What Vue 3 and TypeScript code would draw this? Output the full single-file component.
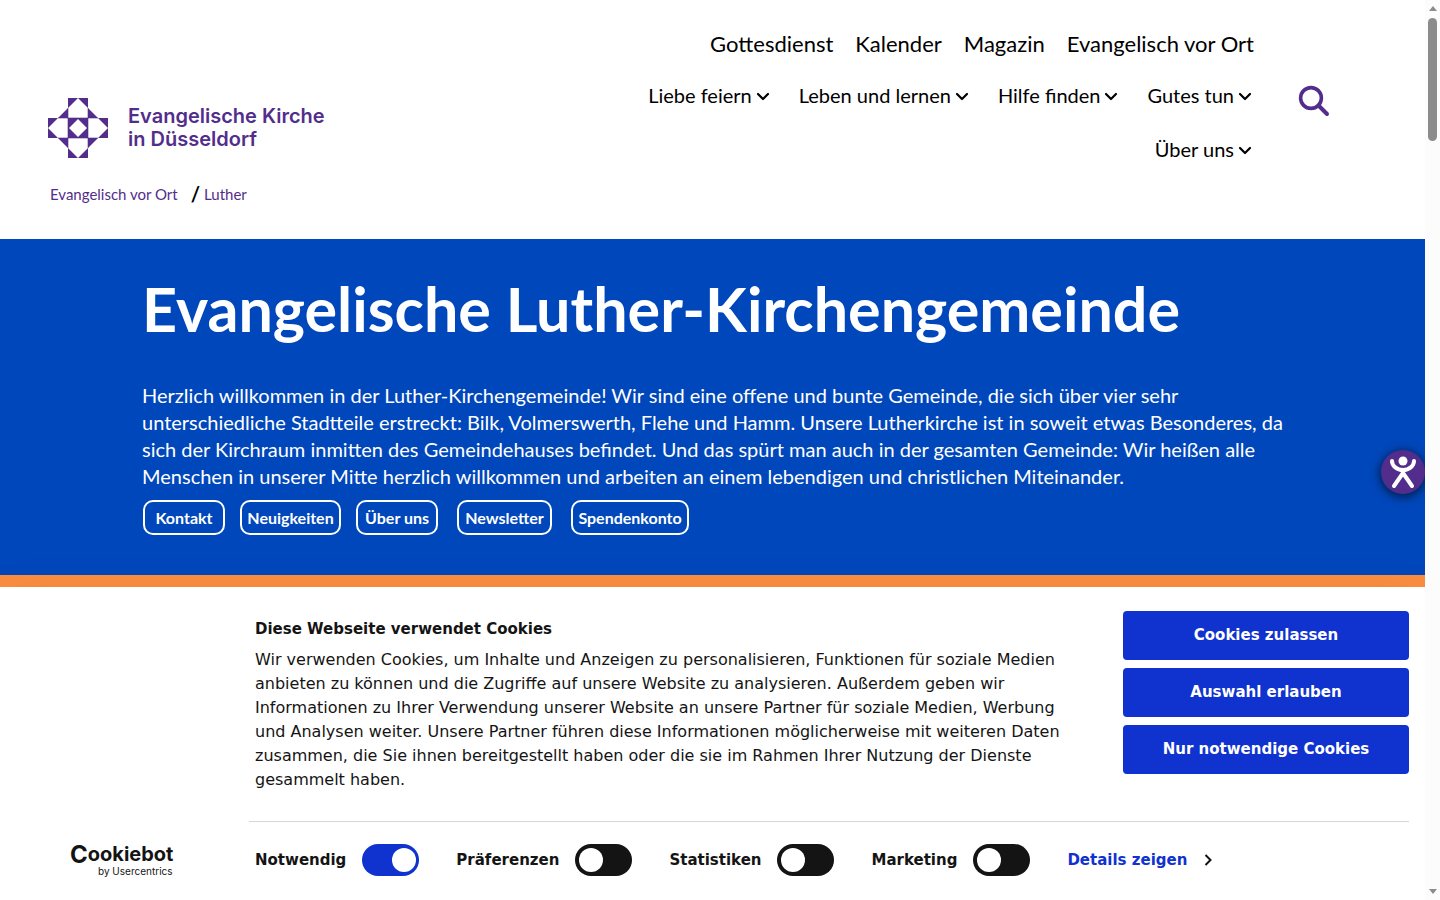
<script setup lang="ts">
import { ref } from 'vue'

interface Consent {
  id: string
  label: string
  checked: boolean
}

const topLinks: string[] = ['Gottesdienst', 'Kalender', 'Magazin', 'Evangelisch vor Ort']
const menus: string[] = ['Liebe feiern', 'Leben und lernen', 'Hilfe finden', 'Gutes tun', 'Über uns']
const anchors: { label: string; size: string }[] = [
  { label: 'Kontakt', size: 'short' },
  { label: 'Neuigkeiten', size: 'medium' },
  { label: 'Über uns', size: 'short wide-gap' },
  { label: 'Newsletter', size: 'regular wide-gap' },
  { label: 'Spendenkonto', size: 'long' },
]
const choices: string[] = ['Cookies zulassen', 'Auswahl erlauben', 'Nur notwendige Cookies']
const consents = ref<Consent[]>([
  { id: 'necessary', label: 'Notwendig', checked: true },
  { id: 'preferences', label: 'Präferenzen', checked: false },
  { id: 'statistics', label: 'Statistiken', checked: false },
  { id: 'marketing', label: 'Marketing', checked: false },
])
</script>

<template>
  <div class="viewport">
    <div class="page">
      <header class="header">
        <div class="brand">
          <a class="logo" href="#">
            <svg class="logo-mark" viewBox="0 0 60 60" aria-hidden="true">
              <path
                fill="#532d8c"
                fill-rule="evenodd"
                d="M20 0H30L20 10ZM30 0H40V10ZM20 10V20H10ZM40 10L50 20H40ZM0 20H10L0 30ZM0 30L10 40H0ZM50 20H60V30ZM60 30V40H50ZM10 40H20V50ZM40 40H50L40 50ZM20 50L30 60H20ZM40 50V60H30ZM20 20H40V40H20ZM30 21L21 30L30 39L39 30Z"
              />
              <path
                fill="none"
                stroke="#532d8c"
                stroke-width="0.6"
                d="M20 10V50M40 10V50M10 20H50M10 40H50"
              />
            </svg>
            <span class="logo-text">Evangelische Kirche<br />in Düsseldorf</span>
          </a>
          <nav class="breadcrumb" aria-label="Brotkrumen">
            <a href="#">Evangelisch vor Ort</a>
            <span class="slash">/</span>
            <a href="#">Luther</a>
          </nav>
        </div>
        <div class="menus">
          <nav class="top-nav" aria-label="Schnellzugriff">
            <a v-for="link in topLinks" :key="link" href="#">{{ link }}</a>
          </nav>
          <nav class="main-nav" aria-label="Hauptmenü">
            <a v-for="menu in menus" :key="menu" href="#">
              {{ menu }}
              <svg class="chevron" viewBox="0 0 14 14" aria-hidden="true">
                <path d="M2 6L7 11L12 6" fill="none" stroke="#000" stroke-width="2.200" stroke-linecap="round" stroke-linejoin="round" />
              </svg>
            </a>
          </nav>
        </div>
        <button class="search" type="button" aria-label="Suche">
          <svg viewBox="0 0 32 32" aria-hidden="true">
            <circle cx="13" cy="13" r="10.400" fill="none" stroke="#532d8c" stroke-width="3.600" />
            <path d="M20.500 20.500L29 29" stroke="#532d8c" stroke-width="4" stroke-linecap="round" />
          </svg>
        </button>
      </header>

      <main class="hero">
        <h1>Evangelische Luther-Kirchengemeinde</h1>
        <p>
          Herzlich willkommen in der Luther-Kirchengemeinde! Wir sind eine offene und bunte Gemeinde, die sich über
          vier sehr unterschiedliche Stadtteile erstreckt: Bilk, Volmerswerth, Flehe und Hamm. Unsere Lutherkirche ist
          in soweit etwas Besonderes, da sich der Kirchraum inmitten des Gemeindehauses befindet. Und das spürt man
          auch in der gesamten Gemeinde: Wir heißen alle Menschen in unserer Mitte herzlich willkommen und arbeiten an
          einem lebendigen und christlichen Miteinander.
        </p>
        <div class="anchors">
          <a v-for="anchor in anchors" :key="anchor.label" href="#" :class="anchor.size">{{ anchor.label }}</a>
        </div>
        <button class="assist" type="button" aria-label="Barrierefreiheit">
          <svg viewBox="0 0 44 44" aria-hidden="true">
            <circle cx="22" cy="11" r="4.500" fill="#fff" />
            <path
              d="M11 11C11 16 16 20 22 20S33 16 33 11M22 20V23L13 36M22 23L31 36"
              fill="none"
              stroke="#fff"
              stroke-width="4"
              stroke-linecap="round"
              stroke-linejoin="round"
            />
          </svg>
        </button>
      </main>
      <div class="stripe"></div>

      <section class="cookies" aria-labelledby="cookie-title">
        <div class="cookie-body">
          <div class="cookie-text">
            <h2 id="cookie-title">Diese Webseite verwendet Cookies</h2>
            <p>
              Wir verwenden Cookies, um Inhalte und Anzeigen zu personalisieren, Funktionen für soziale Medien anbieten
              zu können und die Zugriffe auf unsere Website zu analysieren. Außerdem geben wir Informationen zu Ihrer
              Verwendung unserer Website an unsere Partner für soziale Medien, Werbung und Analysen weiter. Unsere
              Partner führen diese Informationen möglicherweise mit weiteren Daten zusammen, die Sie ihnen
              bereitgestellt haben oder die sie im Rahmen Ihrer Nutzung der Dienste gesammelt haben.
            </p>
          </div>
          <div class="choices">
            <button v-for="choice in choices" :key="choice" type="button">{{ choice }}</button>
          </div>
        </div>
        <div class="cookie-footer">
          <a class="cookiebot" href="#">
            <span class="cookiebot-name"><span class="cap">C</span>ookiebot</span>
            <span class="cookiebot-by">by Usercentrics</span>
          </a>
          <div class="consents">
            <label v-for="consent in consents" :key="consent.id" :for="consent.id">
              {{ consent.label }}
              <input :id="consent.id" v-model="consent.checked" type="checkbox" role="switch" />
            </label>
            <a class="details" href="#">
              Details zeigen
              <svg viewBox="0 0 8 12" aria-hidden="true">
                <path d="M1.500 1L6.500 6L1.500 11" fill="none" stroke="#141414" stroke-width="2" />
              </svg>
            </a>
          </div>
        </div>
      </section>
    </div>
    <div class="scrollbar" aria-hidden="true">
      <span class="arrow up"></span>
      <span class="thumb"></span>
      <span class="arrow down"></span>
    </div>
  </div>
</template>

<style>
body {
  margin: 0;
  overflow: hidden;
}
</style>

<style scoped>
* {
  box-sizing: border-box;
}
a {
  color: inherit;
  text-decoration: none;
}
button {
  border: 0;
  padding: 0;
  cursor: pointer;
}
.viewport {
  display: flex;
  min-height: 100vh;
  background: #fff;
  color: #000;
  font-family: Lato, sans-serif;
}
.page {
  display: flex;
  flex: 1;
  flex-direction: column;
  min-width: 0;
  overflow: hidden;
}

/* Header */
.header {
  display: flex;
  min-height: 239px;
  padding: 28px 95px 0 48px;
}
.brand {
  padding-top: 70px;
}
.logo {
  display: flex;
  align-items: center;
  gap: 20px;
}
.logo-mark {
  width: 60px;
  height: 60px;
}
.logo-text {
  color: #532d8c;
  font: 600 20px/23px Inter, sans-serif;
}
.breadcrumb {
  display: flex;
  align-items: center;
  padding: 25px 0 0 2px;
  color: #532d8c;
  font-size: 15px;
  line-height: 22px;
}
.slash {
  margin: 0 4px 0 13px;
  color: #000;
  font-size: 20px;
  font-weight: 700;
}
.menus {
  flex: 1;
  margin-left: auto;
  max-width: 640px;
}
.top-nav,
.main-nav {
  display: flex;
  flex-wrap: wrap;
  justify-content: flex-end;
}
.top-nav {
  column-gap: 22px;
  font-size: 22px;
  line-height: 32px;
}
.main-nav {
  padding: 8px 2px 0 0;
  column-gap: 29px;
  font-size: 20px;
  line-height: 54px;
}
.main-nav a {
  display: flex;
  align-items: center;
  gap: 4px;
}
.chevron {
  width: 14px;
  height: 14px;
}
.search {
  align-self: flex-start;
  width: 32px;
  height: 32px;
  margin: 57px 0 0 44px;
  background: none;
}

/* Hero */
.hero {
  position: relative;
  padding: 31px 142px 40px;
  background: #0047bb;
  color: #fff;
}
h1 {
  margin: 0;
  font-size: 61px;
  line-height: 78px;
}
.hero p {
  margin: 34px 0 10px;
  font-size: 20px;
  line-height: 27px;
}
.anchors {
  display: flex;
  gap: 15px;
  padding-left: 1px;
}
.anchors a {
  border: 2px solid #fff;
  border-radius: 10px;
  font-size: 16px;
  font-weight: 700;
  line-height: 31px;
  text-align: center;
}
.short {
  width: 82px;
}
.medium {
  width: 101px;
}
.regular {
  width: 95px;
}
.long {
  width: 118px;
}
.wide-gap {
  margin-right: 4px;
}
.assist {
  position: absolute;
  right: 0;
  bottom: 81px;
  width: 44px;
  height: 44px;
  border-radius: 50%;
  background: #532d8c;
  box-shadow: 0 2px 8px 2px rgba(0, 0, 0, 0.5);
}
.stripe {
  height: 12px;
  background: #fa8d41;
}

/* Cookie banner */
.cookies {
  position: relative;
  flex: 1;
  padding: 24px 16px 0 0;
  background: #fff;
  box-shadow: 0 8px 48px rgba(0, 0, 0, 0.06);
  color: #141414;
  font-family: "DejaVu Sans", sans-serif;
  font-size: 15px;
  line-height: 24px;
}
.cookie-body {
  display: flex;
  justify-content: space-between;
  margin-left: 249px;
  padding: 0 0 29px 6px;
  border-bottom: 1px solid #d6d6d6;
}
.cookie-text {
  max-width: 824px;
  padding-top: 6px;
}
.cookie-text h2 {
  margin: 0 0 7px;
  font-size: 15px;
  line-height: 24px;
}
.cookie-text p {
  margin: 0;
  font-size: 16px;
}
.choices {
  display: flex;
  flex-direction: column;
  gap: 8px;
  width: 286px;
}
.choices button {
  height: 49px;
  padding-bottom: 2px;
  border-radius: 4px;
  background: #1032cf;
  color: #fff;
  font: 700 15px/24px "DejaVu Sans", sans-serif;
}
.cookie-footer {
  display: flex;
  align-items: center;
  padding-top: 21px;
}
.cookiebot {
  display: flex;
  flex-direction: column;
  width: 255px;
  padding-left: 70px;
  font-family: Inter, sans-serif;
}
.cookiebot-name {
  font-size: 20px;
  font-weight: 700;
  line-height: 22px;
}
.cap {
  font-size: 24px;
  line-height: 0;
  vertical-align: -2px;
}
.cookiebot-by {
  padding-left: 28px;
  font-size: 10px;
  line-height: 12px;
}
.consents {
  display: flex;
  align-items: center;
  gap: 37px;
  font-weight: 700;
}
.consents label {
  display: flex;
  align-items: center;
  gap: 16px;
}
.consents input {
  width: 57px;
  height: 32px;
  margin: 0;
  padding: 4px;
  border-radius: 16px;
  background: #141414;
  appearance: none;
}
.consents input::before {
  display: block;
  width: 24px;
  height: 24px;
  border-radius: 50%;
  background: #fff;
  content: "";
}
.consents input:checked {
  padding-left: 30px;
  background: #1032cf;
}
.details {
  display: flex;
  align-items: center;
  gap: 17px;
  color: #1032cf;
}
.details svg {
  width: 8px;
  height: 12px;
}

/* Scrollbar */
.scrollbar {
  display: flex;
  flex-direction: column;
  align-items: center;
  width: 15px;
  padding: 6px 0;
  background: #fcfcfc;
}
.thumb {
  width: 9px;
  height: 123px;
  margin: 7px 0 auto;
  border-radius: 5px;
  background: #8b8b8b;
}
.arrow {
  border: 4px solid transparent;
}
.up {
  border-top: 0;
  border-bottom: 5px solid #8b8b8b;
}
.down {
  border-top: 5px solid #8b8b8b;
  border-bottom: 0;
}
</style>
